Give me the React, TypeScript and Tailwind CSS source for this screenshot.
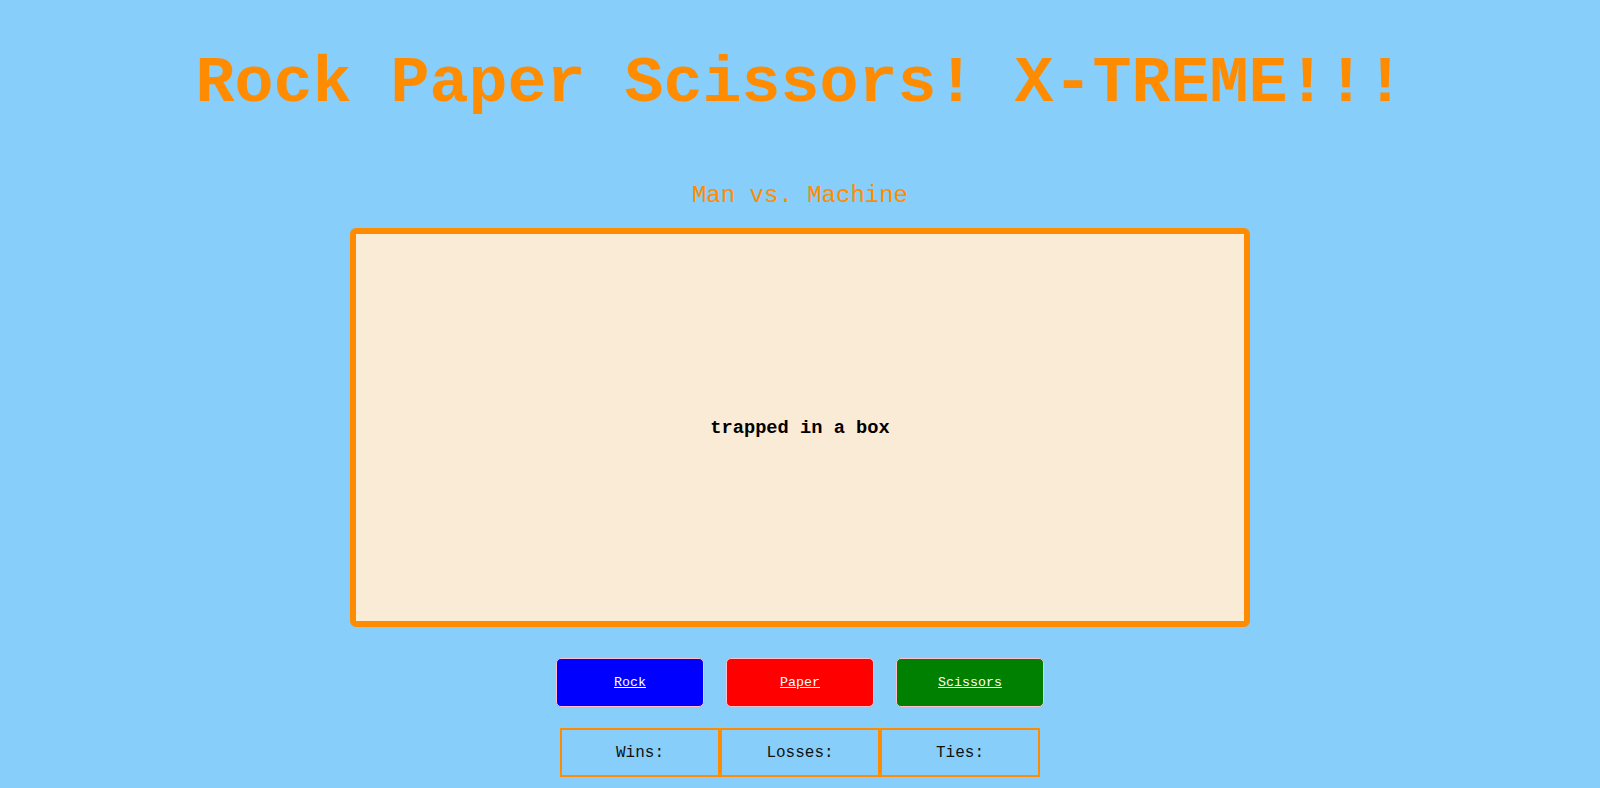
import React from 'react'

const mono = { fontFamily: '"Liberation Mono", "Courier New", monospace' }

const choices = [
  { label: 'Rock', bg: 'bg-[#0000ff]' },
  { label: 'Paper', bg: 'bg-[#ff0000]' },
  { label: 'Scissors', bg: 'bg-[#008000]' },
]

const scores = ['Wins:', 'Losses:', 'Ties:']

export default function App() {
  return (
    <div className="min-h-[788px] bg-[#87cefa] flex flex-col items-center pt-[52px]" style={mono}>
      <h1 className="text-[65px] leading-[65px] font-bold text-[#ff8c00] whitespace-nowrap">
        Rock Paper Scissors! X-TREME!!!
      </h1>

      <h2 className="mt-[67px] text-[24px] leading-[24px] text-[#ff8c00]">Man vs. Machine</h2>

      <div className="mt-[20px] w-[900px] h-[399px] bg-[#faebd7] border-[6px] border-[#ff8c00] rounded-[6px] flex items-center justify-center">
        <h3 className="text-[18.7px] leading-[19px] font-bold text-black mt-[1px]">trapped in a box</h3>
      </div>

      <div className="mt-[31px] flex gap-[22px]">
        {choices.map((c) => (
          <button
            key={c.label}
            className={`w-[148px] h-[49px] ${c.bg} border border-[#ffc0cb] rounded-[5px] flex items-center justify-center`}
          >
            <a href="#" className="text-white underline text-[13.3px] leading-[14px] mt-[1px]">
              {c.label}
            </a>
          </button>
        ))}
      </div>

      <div className="mt-[21px] flex">
        {scores.map((s) => (
          <div
            key={s}
            className="w-[160px] h-[49px] border-2 border-[#ff8c00] flex items-center justify-center text-[16px] text-[#111]"
          >
            {s}
          </div>
        ))}
      </div>
    </div>
  )
}
